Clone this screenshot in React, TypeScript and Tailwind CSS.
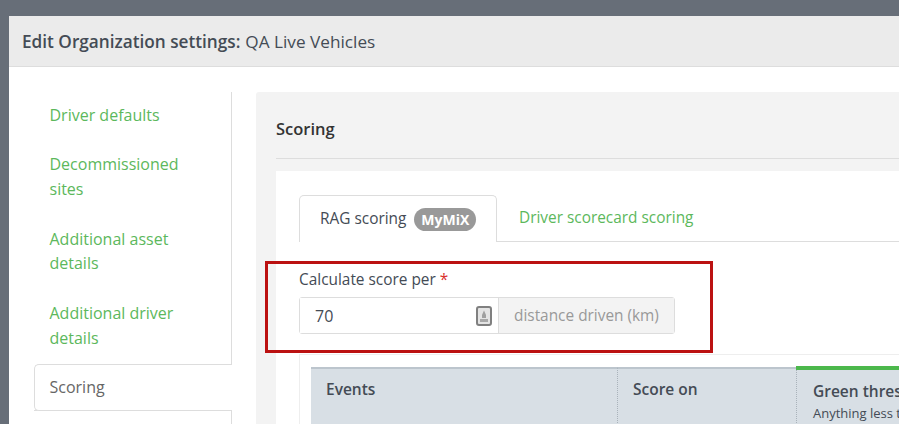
import React from 'react';

const navItems = [
  { label: 'Driver defaults', height: 'h-[49px]', leading: 'leading-[24.5px]' },
  { label: 'Decommissioned sites', height: 'h-[75px]', leading: 'leading-[24.5px]' },
  { label: 'Additional asset details', height: 'h-[74px]', leading: 'leading-[24px]' },
  { label: 'Additional driver details', height: 'h-[63px]', leading: 'leading-[24.5px]' },
];

const Sidebar = () => (
  <div className="w-[223px] shrink-0 border-r border-[#dddddd] pt-[11px]">
    {navItems.map((item) => (
      <div key={item.label} className={`${item.height} ${item.leading} pl-[40.5px] pr-[30px] text-[16px] text-[#5cb85c]`}>
        {item.label}
      </div>
    ))}
    <div className="relative z-10 -mr-px ml-[25px] h-[47px] rounded-l-[5px] border border-r-0 border-[#dddddd] bg-white pl-[14.5px] pt-[10px] text-[16px] leading-[24px] text-[#666666]">
      Scoring
    </div>
    <div className="-mt-px ml-[25px] h-[20px] border-t border-[#dddddd]" />
  </div>
);

const Tabs = () => (
  <div className="ml-[23px] flex h-[47px] border-b border-[#dddddd]">
    <div className="-mb-px flex h-[47px] w-[198px] items-center rounded-t-[5px] border border-b-0 border-[#dddddd] bg-white pl-[20px] text-[15.4px] text-[#444b55]">
      <span>RAG scoring</span>
      <span className="ml-[8px] flex h-[23px] w-[62px] items-center justify-center rounded-full bg-[#999999] text-[14px] font-bold text-white">
        MyMiX
      </span>
    </div>
    <div className="flex items-center pl-[22px] text-[15.4px] text-[#5cb85c]">Driver scorecard scoring</div>
  </div>
);

const ScoreField = () => (
  <div className="relative ml-[23px] mt-[27px] w-[376px]">
    <div className="h-[28px] text-[15.4px] leading-[22px] text-[#444b55]">
      Calculate score per <span className="text-[#d9312b]">*</span>
    </div>
    <div className="flex h-[37px] rounded-[3px] border border-[#dddddd]">
      <div className="flex w-[199px] items-center justify-between border-r border-[#dddddd] bg-white pl-[15px] pr-[6px] text-[16px] text-[#444b55]">
        <span>70</span>
        <svg width="16" height="20" viewBox="0 0 16 20">
          <rect x="1" y="1" width="14" height="18" rx="2" fill="#e4e4e4" stroke="#808080" strokeWidth="2" />
          <path d="M8 4.5 L10 9 H6 Z" fill="#a0a0a0" />
          <rect x="6" y="9" width="4" height="3" fill="#a0a0a0" />
          <rect x="4" y="13" width="8" height="3" fill="#a8a8a8" />
        </svg>
      </div>
      <div className="flex flex-1 items-center bg-[#f3f3f3] pl-[15px] text-[15.4px] text-[#999999]">distance driven (km)</div>
    </div>
    <div className="absolute -left-[34px] -top-[8px] h-[92px] w-[448px] border-[3px] border-[#bb1111]" />
  </div>
);

const ScoreTable = () => (
  <div className="ml-[23px] mt-[20px] border border-[#eeeeee] pl-[11px] pt-[12px]">
    <div className="flex h-[80px] bg-[#d8dfe5] text-[15.5px] font-semibold text-[#444b55]">
      <div className="w-[307px] border-t-2 border-r border-t-[#bcc5cd] border-r-[#a9b2ba] [border-right-style:dotted] pl-[15px] pt-[9px]">Events</div>
      <div className="w-[179px] border-t-2 border-r border-t-[#bcc5cd] border-r-[#a9b2ba] [border-right-style:dotted] pl-[15px] pt-[9px]">Score on</div>
      <div className="-ml-px -mt-px flex-1 border-t-[4px] border-[#4cb84c] pl-[17px] pt-[10px] whitespace-nowrap">
        <div className="leading-[22px]">Green threshold</div>
        <div className="mt-[2px] text-[13px] font-normal leading-[18px]">Anything less than</div>
      </div>
    </div>
  </div>
);

export default function App() {
  return (
    <div className="h-[424px] w-[899px] overflow-hidden bg-[#676e78] pl-[9px] pt-[16px] font-['Open_Sans',sans-serif]">
      <div className="h-[500px] w-[1000px] rounded-tl-[4px] bg-white">
        <div className="flex h-[51px] items-center border-b border-[#dddddd] bg-[#ebebeb] pl-[13px] pt-[1px] text-[17.2px] text-[#444b55]">
          <span className="font-semibold">Edit Organization settings:</span>
          <span className="ml-[5px]">QA Live Vehicles</span>
        </div>
        <div className="flex pt-[25px]">
          <Sidebar />
          <div className="ml-[24px] flex-1 rounded-tl-[3px] bg-[#f3f3f3] pl-[20px]">
            <div className="flex h-[67px] items-end border-b border-[#dddddd] pb-[16px] text-[16.5px] font-semibold text-[#333333]">
              Scoring
            </div>
            <div className="mt-[12px] h-[300px] bg-white pt-[24px]">
              <Tabs />
              <ScoreField />
              <ScoreTable />
            </div>
          </div>
        </div>
      </div>
    </div>
  );
}
